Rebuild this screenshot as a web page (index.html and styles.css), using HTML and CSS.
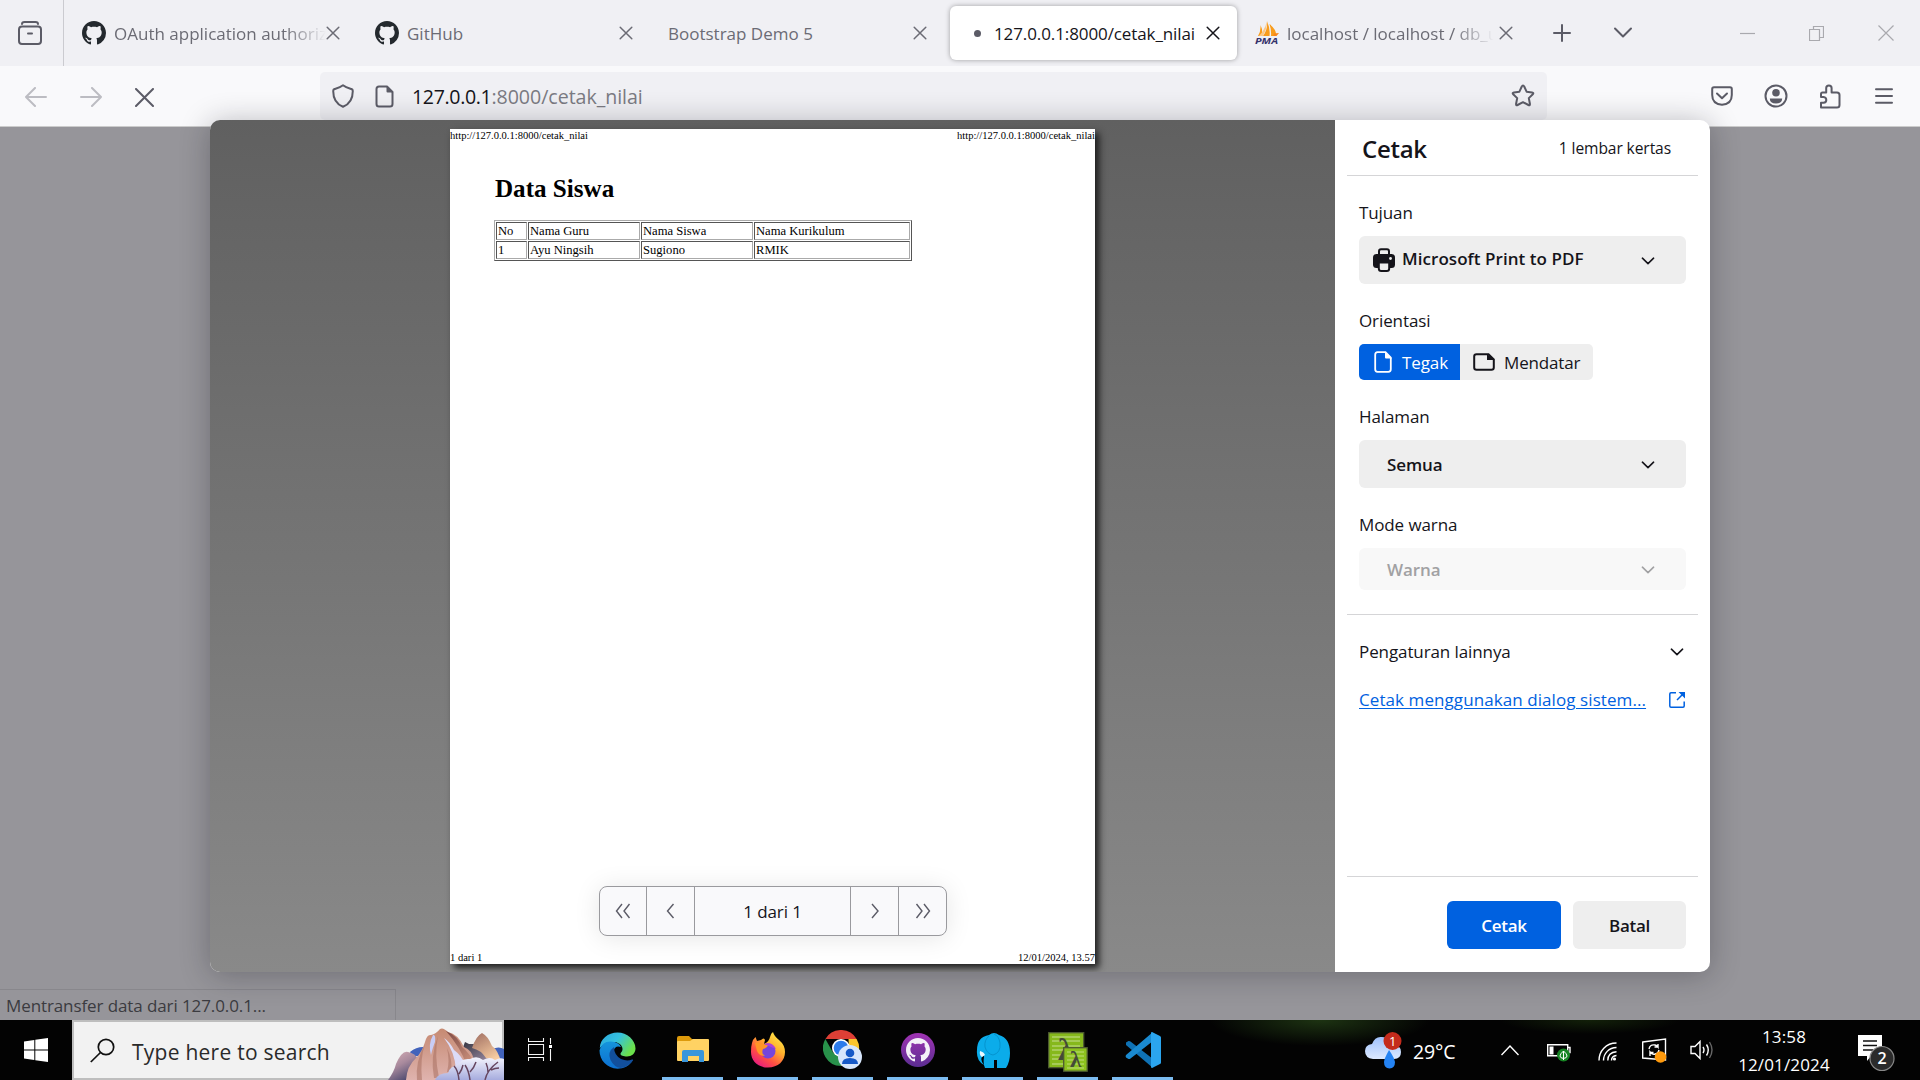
FILE: index.html
```html
<!DOCTYPE html>
<html lang="id">
<head>
<meta charset="utf-8">
<title>127.0.0.1:8000/cetak_nilai</title>
<link rel="stylesheet" href="styles.css">
</head>
<body>
<svg class="sprite" aria-hidden="true">
  <symbol id="github" viewBox="0 0 16 16"><path d="M8 0C3.58 0 0 3.58 0 8c0 3.54 2.29 6.53 5.47 7.59.4.07.55-.17.55-.38 0-.19-.01-.82-.01-1.49-2.01.37-2.53-.49-2.69-.94-.09-.23-.48-.94-.82-1.13-.28-.15-.68-.52-.01-.53.63-.01 1.08.58 1.23.82.72 1.21 1.87.87 2.33.66.07-.52.28-.87.51-1.07-1.78-.2-3.64-.89-3.64-3.95 0-.87.31-1.59.82-2.15-.08-.2-.36-1.02.08-2.12 0 0 .67-.21 2.2.82.64-.18 1.32-.27 2-.27s1.36.09 2 .27c1.53-1.04 2.2-.82 2.2-.82.44 1.1.16 1.92.08 2.12.51.56.82 1.27.82 2.15 0 3.07-1.87 3.75-3.65 3.95.29.25.54.73.54 1.48 0 1.07-.01 1.93-.01 2.2 0 .21.15.46.55.38A8.01 8.01 0 0 0 16 8c0-4.42-3.58-8-8-8z"/></symbol>
  <symbol id="close" viewBox="0 0 14 14"><path d="M1.2 1.2l11.6 11.6M12.8 1.2L1.2 12.8" fill="none" stroke="currentColor" stroke-width="1.5" stroke-linecap="round"/></symbol>
  <symbol id="chevron" viewBox="0 0 14 8"><path d="M1.4 1.2L7 6.6l5.6-5.4" fill="none" stroke="currentColor" stroke-width="1.6" stroke-linecap="round" stroke-linejoin="round"/></symbol>
</svg>

<header class="tabs">
  <div class="recent">
    <svg width="26" height="26" viewBox="0 0 26 26" fill="none" stroke="#5b5b66" stroke-width="2" stroke-linecap="round"><path d="M5 4Q5 2 7.5 2H18.500Q21 2 21 4"/><rect x="2" y="6.500" width="22" height="17.500" rx="3"/><path d="M11 13.500h4"/></svg>
  </div>
  <div class="tab tab-oauth">
    <svg class="favicon"><use href="#github"/></svg>
    <span class="tab-title fade">OAuth application authorization</span>
    <svg class="x"><use href="#close"/></svg>
  </div>
  <div class="tab tab-github">
    <svg class="favicon"><use href="#github"/></svg>
    <span class="tab-title">GitHub</span>
    <svg class="x"><use href="#close"/></svg>
  </div>
  <div class="tab tab-demo">
    <span class="tab-title">Bootstrap Demo 5</span>
    <svg class="x"><use href="#close"/></svg>
  </div>
  <div class="tab tab-active">
    <i class="dot"></i>
    <span class="tab-title">127.0.0.1:8000/cetak_nilai</span>
    <svg class="x"><use href="#close"/></svg>
  </div>
  <div class="tab tab-pma">
    <svg class="sails" width="24" height="24" viewBox="0 0 24 24">
      <path d="M3 15Q6 10 5.500 4Q8 9 7 15zM8 15Q13 8 12 0Q15.500 8 14.500 15zM16 15Q16.500 9 14.500 3Q22 9 21 15z" fill="#f89c1c"/>
      <path d="M8 15Q12 8 12 0L10.500 5Q8 11 4 15z" fill="#fbc888"/>
      <path d="M19 12.500l5-.500-2.500 3h-3z" fill="#f8871c"/>
      <text x="0" y="23.200" class="pma" textLength="23" lengthAdjust="spacingAndGlyphs">PMA</text>
    </svg>
    <span class="tab-title fade">localhost / localhost / db_uas</span>
    <svg class="x"><use href="#close"/></svg>
  </div>
  <div class="tab-tools">
    <svg width="18" height="18" viewBox="0 0 18 18" stroke="#5b5b66" stroke-width="2" stroke-linecap="round"><path d="M9 1v16M1 9h16"/></svg>
    <svg width="20" height="12" viewBox="0 0 20 12" fill="none" stroke="#5b5b66" stroke-width="2" stroke-linecap="round" stroke-linejoin="round"><path d="M2 1.500l8 8 8-8"/></svg>
  </div>
  <div class="window-tools">
    <svg width="15" height="15" viewBox="0 0 15 15"><path d="M0 7.500h15"/></svg>
    <svg width="15" height="15" viewBox="0 0 15 15"><path d="M.5 3.500h10v11H.5zM4.500 3.500v-3h10v11h-4"/></svg>
    <svg width="16" height="16" viewBox="0 0 16 16"><path d="M.5.500l15 15M15.500.500l-15 15"/></svg>
  </div>
</header>

<nav class="nav">
  <div class="history">
    <svg class="off" width="22" height="20" viewBox="0 0 22 20"><path d="M21 10H1M10 1L1 10l9 9"/></svg>
    <svg class="off" width="22" height="20" viewBox="0 0 22 20"><path d="M1 10h20M12 1l9 9-9 9"/></svg>
    <svg width="19" height="19" viewBox="0 0 19 19"><path d="M1 1l17 17M18 1L1 18"/></svg>
  </div>
  <div class="urlbar">
    <svg width="22" height="24" viewBox="0 0 22 24"><path d="M11 1.200C8 3.500 5 4.200 2.500 5Q1.200 5.500 1.200 7C1.200 14 4 20 11 22.800C18 20 20.800 14 20.800 7Q20.800 5.500 19.500 5C17 4.200 14 3.500 11 1.200z"/></svg>
    <svg width="19" height="23" viewBox="0 0 19 23"><path d="M4 1.500h8l5.500 5.500v12q0 2.500-2.500 2.500H4q-2.500 0-2.500-2.500V4q0-2.500 2.500-2.500z"/><path d="M11.500 1v5.500q0 1 1 1H18z" fill="#5b5b66" stroke="none"/></svg>
    <span class="url"><b>127.0.0.1</b>:8000/cetak_nilai</span>
    <svg class="star" width="24" height="24" viewBox="0 0 24 24"><path d="M12 1.500q.8 0 1.200 1l2.400 5.200 5.500.700q2 .400.700 1.800l-4 3.900 1.100 5.700q.2 2-1.500 1.200L12 18.200l-5.400 2.800q-1.700.800-1.500-1.200l1.100-5.700-4-3.900Q.9 8.800 2.900 8.400l5.500-.700 2.400-5.200q.4-1 1.200-1z"/></svg>
  </div>
  <div class="nav-tools">
    <svg width="22" height="20" viewBox="0 0 22 20"><path d="M3 1.200h16q1.800 0 1.800 1.800v6q0 9-9.800 9.800Q1.200 18 1.200 9V3q0-1.800 1.800-1.800z"/><path d="M6 7.500l5 4.700 5-4.700"/></svg>
    <svg width="24" height="24" viewBox="0 0 24 24"><circle cx="12" cy="12" r="10.500"/><circle cx="12" cy="8.800" r="3.800" class="solid"/><path d="M5.800 14.500h12.400q0 5-6.200 5t-6.200-5z" class="solid"/></svg>
    <svg width="22" height="25" viewBox="0 0 22 25"><path d="M3.500 8.500h3.700V4q0-2.500 2.700-2.500T12.600 4v4.500h5.400q2.500 0 2.500 2.500v10q0 2.500-2.500 2.500H2V18.800h2.500q2.800-.400 2.800-2.900t-2.800-2.900H2v-3q0-1.500 1.500-1.500z"/></svg>
    <svg width="18" height="16" viewBox="0 0 18 16"><path d="M1 1.200h16M1 8h16M1 14.800h16"/></svg>
  </div>
</nav>

<main class="backdrop">
  <div class="status">Mentransfer data dari 127.0.0.1...</div>
</main>

<section class="dialog">
  <div class="preview">
    <article class="sheet">
      <div class="sheet-line"><span>http://127.0.0.1:8000/cetak_nilai</span><span>http://127.0.0.1:8000/cetak_nilai</span></div>
      <div class="sheet-body">
        <h1>Data Siswa</h1>
        <div class="table">
          <span>No</span><span>Nama Guru</span><span>Nama Siswa</span><span>Nama Kurikulum</span>
          <span>1</span><span>Ayu Ningsih</span><span>Sugiono</span><span>RMIK</span>
        </div>
      </div>
      <div class="sheet-line"><span>1 dari 1</span><span>12/01/2024, 13.57</span></div>
    </article>
    <div class="pager">
      <span><svg width="16" height="16" viewBox="0 0 16 16"><path d="M7 1L1.500 8 7 15M14.500 1L9 8l5.500 7"/></svg></span>
      <span><svg width="16" height="16" viewBox="0 0 16 16"><path d="M10.500 1L4.500 8l6 7"/></svg></span>
      <span class="count">1 dari 1</span>
      <span><svg width="16" height="16" viewBox="0 0 16 16"><path d="M5 1l6 7-6 7"/></svg></span>
      <span><svg width="16" height="16" viewBox="0 0 16 16"><path d="M1.500 1L7 8l-5.500 7M9 1l5.500 7L9 15"/></svg></span>
    </div>
  </div>
  <aside class="settings">
    <div class="settings-head"><h2>Cetak</h2><span>1 lembar kertas</span></div>
    <div class="fields">
      <label>Tujuan</label>
      <div class="select printer">
        <svg width="22" height="24" viewBox="0 0 22 24"><path d="M6 7V3.500Q6 1.200 8 1.200h6q2 0 2 2.300V7" fill="none" stroke="#15141a" stroke-width="2"/><rect y="6" width="22" height="14" rx="3.500" fill="#15141a"/><path d="M5.800 14.500h10.400v6q0 2.500-2.500 2.500H8.300q-2.500 0-2.500-2.500z" fill="#eee" stroke="#15141a" stroke-width="2"/><circle cx="17.500" cy="10.500" r="1.400" fill="#eee"/></svg>
        <span>Microsoft Print to PDF</span>
        <svg class="chev"><use href="#chevron"/></svg>
      </div>
      <label>Orientasi</label>
      <div class="toggle">
        <div class="portrait"><svg width="18" height="22" viewBox="0 0 18 22"><path d="M3.500 1.200h8l5.300 5.300v11.800q0 2.500-2.500 2.500H3.500Q1.200 20.800 1.200 18.300V3.700Q1.200 1.200 3.500 1.200z" fill="none" stroke="#fff" stroke-width="1.800"/><path d="M11 1v5.500q0 1 1 1h6z" fill="#fff"/></svg><span>Tegak</span></div>
        <div class="landscape"><svg width="22" height="18" viewBox="0 0 22 18"><path d="M3.500 1.200h12l5.300 5.300v8q0 2.300-2.300 2.300h-15q-2.300 0-2.300-2.300v-11q0-2.300 2.300-2.300z" fill="none" stroke="#15141a" stroke-width="2"/><path d="M14 1v6h7.500z" fill="#15141a"/></svg><span>Mendatar</span></div>
      </div>
      <label>Halaman</label>
      <div class="select"><span>Semua</span><svg class="chev"><use href="#chevron"/></svg></div>
      <label>Mode warna</label>
      <div class="select disabled"><span>Warna</span><svg class="chev"><use href="#chevron"/></svg></div>
    </div>
    <div class="more">
      <div class="more-row"><span>Pengaturan lainnya</span><svg class="chev"><use href="#chevron"/></svg></div>
      <div class="more-row link"><a>Cetak menggunakan dialog sistem...</a>
        <svg width="16" height="16" viewBox="0 0 16 16" fill="none" stroke="#0061e0" stroke-width="1.500"><path d="M7 .8H2Q.8.800.8 2v12q0 1.200 1.200 1.200h12q1.200 0 1.200-1.200V9.500M8 8l6.500-6.500"/><path d="M9.500 0H16v6.500z" fill="#0061e0" stroke="none"/></svg>
      </div>
    </div>
    <div class="actions"><button class="primary">Cetak</button><button>Batal</button></div>
  </aside>
</section>

<footer class="taskbar">
  <div class="start"><svg width="24" height="24" viewBox="0 0 24 24" fill="#fff"><path d="M0 3.400L10.300 2v9.500H0zM11.300 1.800L24 0v11.500H11.300zM0 12.500h10.300V22L0 20.600zM11.300 12.500H24V24l-12.700-1.800z"/></svg></div>
  <div class="search">
    <svg width="25" height="25" viewBox="0 0 25 25" fill="none" stroke="#111" stroke-width="1.700"><circle cx="16" cy="9" r="7.700"/><path d="M10.500 14.500L.8 24"/></svg>
    <span>Type here to search</span>
    <svg class="mountains" width="116" height="52" viewBox="0 0 116 52">
      <defs>
        <linearGradient id="m1" x1="0" y1="0" x2=".6" y2="1"><stop offset="0" stop-color="#dcb3b8"/><stop offset=".5" stop-color="#a98a9d"/><stop offset="1" stop-color="#4f4b70"/></linearGradient>
        <linearGradient id="m2" x1="0" y1="0" x2="0" y2="1"><stop offset="0" stop-color="#c68a72"/><stop offset="1" stop-color="#dfb3ae"/></linearGradient>
        <linearGradient id="m3" x1="0" y1="0" x2="1" y2="1"><stop offset="0" stop-color="#7d4a45"/><stop offset="1" stop-color="#d79c84"/></linearGradient>
        <linearGradient id="m4" x1="0" y1="0" x2=".6" y2="1"><stop offset="0" stop-color="#9e6c60"/><stop offset="1" stop-color="#f7cda2"/></linearGradient>
        <linearGradient id="m5" x1="0" y1="0" x2="0" y2="1"><stop offset="0" stop-color="#f4f4fd"/><stop offset="1" stop-color="#a6acde"/></linearGradient>
        <linearGradient id="m6" x1="0" y1="0" x2="1" y2="1"><stop offset="0" stop-color="#33333f"/><stop offset="1" stop-color="#ad9bb4"/></linearGradient>
      </defs>
      <path d="M22 24q6-5 13-5v9H24zM104 21q7-3 12 0v12h-12z" fill="#4263bb"/>
      <path d="M0 52Q6 44 8 36Q14 22 20 24Q27 25 31 32V52z" fill="url(#m1)"/>
      <path d="M74 22l3-8 4 2 5 0 8 8 13 12H76z" fill="url(#m6)"/>
      <path d="M84 20Q88 8 94 5Q100 8 104 18Q110 22 113 34L98 30Q93 22 84 20z" fill="url(#m4)"/>
      <path d="M18 52Q19 38 28 30Q34 24 37 14Q39 6 43 7Q48 6 52 1Q55-1 60 4Q70 6 76 19Q84 22 86 32V52z" fill="url(#m2)"/>
      <path d="M58 3Q70 8 74 19Q82 25 88 38L78 36Q73 20 58 3z" fill="url(#m3)"/>
      <path d="M45 7Q48 6 47 14Q44 22 43 27Q40 16 45 7z" fill="#c9cdf5"/>
      <path d="M56 10Q62 14 66 22Q73 27 77 36Q77 40 74 42H68Q67 24 56 10z" fill="#dcdcf8"/>
      <path d="M37 16Q32 30 34 52H29Q27 34 37 16zM50 8Q46 26 51 50H46Q42 28 50 8zM59 20q6 12 4 24h-4q3-11 0-24z" fill="#a76f60" opacity=".55"/>
      <path d="M47 52Q50 45 60 45Q62 38 70 37Q73 30 82 31Q89 27 95 32Q102 28 107 32Q112 29 116 31V52z" fill="url(#m5)"/>
      <path d="M71 52Q70 42 66 38M71 46q3-4 4-9M82 52q-1-9-5-15M82 44q4-4 6-10M97 52q2-10 13-18M100 45q0-6-2-10M103 42q4-2 8-2" fill="none" stroke="#65455f" stroke-width="1.500"/>
    </svg>
  </div>
  <div class="taskview"><svg width="24" height="24" viewBox="0 0 24 24" fill="none" stroke="#f4f4f4" stroke-width="1.100"><path d="M.5 0v3.500h15V0M.5 6.500h15v10H.5zM.5 23v-3.500h15V23M22.500 0v6M22.500 11v12"/><rect x="21" y="7" width="3" height="3" fill="#fff" stroke="none"/></svg></div>

  <div class="app idle"><svg width="37" height="37" viewBox="0 0 37 37">
    <defs><linearGradient id="e1" x1="0" x2="1" y1="0" y2=".5"><stop offset="0" stop-color="#2aa7dc"/><stop offset=".5" stop-color="#35c1e0"/><stop offset="1" stop-color="#6be04b"/></linearGradient><linearGradient id="e2" x1="0" x2="0" y1="0" y2="1"><stop offset="0" stop-color="#1595dc"/><stop offset="1" stop-color="#0d6fd0"/></linearGradient></defs>
    <path d="M.8 16C1 7 9 .500 18.500.500S36.500 8 36.500 16.500c0 5-4 8-8.500 8-3.500 0-6.500-1-6.500-2.500s2-2 2-5-3-6.500-8-7Q6 9 .800 16z" fill="url(#e1)"/>
    <path d="M.5 18.500Q3 9 12 9.500q8 .500 10 5.500-6-2-7.500 4c-1 6 5 12 12 12q3 0 6.500-1.500-5 7-14.500 7.200C8 36.500.500 28 .500 18.500z" fill="url(#e2)"/>
    <path d="M15 15Q8 20 11.500 28q3.500 7 10 8 8-1 12.500-7.500.5-1.500-1-1Q28 29.500 22 27q-7-4-7-12z" fill="#124f9c"/></svg></div>
  <div class="app"><svg width="32" height="28" viewBox="0 0 32 28"><path d="M0 2q0-2 2-2h10l3 3h10v10H0z" fill="#dd9a0b"/><path d="M0 6q0-1 1-1h12l3-2h15q1 0 1 1v20q0 1-1 1H1q-1 0-1-1z" fill="#ffd263"/><path d="M5 26V16q0-2 2-2h18q2 0 2 2v10h-5v-6H11v6z" fill="#3996db"/></svg></div>
  <div class="app"><svg width="36" height="36" viewBox="0 0 36 36">
    <defs><linearGradient id="f1" x1=".9" y1="0" x2=".2" y2="1"><stop offset="0" stop-color="#fff44f"/><stop offset=".4" stop-color="#ffb02c"/><stop offset=".7" stop-color="#ff4f43"/><stop offset="1" stop-color="#e31587"/></linearGradient></defs>
    <path d="M2 11Q3 7 5.500 5L7 9l4-1q3-3 4 0l-1 4q5-2 6-7 1-4 3-5 1 4 6 8 6 5 6 12c0 9-7 15.500-17 15.500S1 29 1 20Q1 14 2 11z" fill="url(#f1)"/>
    <circle cx="18" cy="19" r="7.500" fill="#7645dc"/><path d="M5 11q5-2 8 1l5 1q-1 3-5 4-2 5 2 7-6 0-8-5z" fill="#ff9526"/><path d="M14 12Q22 9 26 17l-5-2z" fill="#ae3fd8"/></svg></div>
  <div class="app"><svg width="40" height="40" viewBox="0 0 40 40"><path d="M2.400 9A18 18 0 0 1 33.600 9H18z" fill="#dd3f35"/><path d="M33.600 9A18 18 0 0 1 18 36l8-13.500L25.500 9z" fill="#fbc52e"/><path d="M18 36A18 18 0 0 1 2.400 9L10 22.500l8 4.500z" fill="#28914a"/><circle cx="18" cy="18" r="9" fill="#fff"/><circle cx="18" cy="18" r="7.300" fill="#2c7bea"/><circle cx="27" cy="27" r="12" fill="#d7e6fc"/><circle cx="27" cy="23" r="4.300" fill="#1659c7"/><path d="M19 34q0-6 8-6t8 6z" fill="#1659c7"/></svg></div>
  <div class="app"><svg width="34" height="34" viewBox="0 0 34 34"><defs><linearGradient id="g1" x1="0" y1="0" x2="0" y2="1"><stop offset="0" stop-color="#a033b3"/><stop offset="1" stop-color="#5b2d91"/></linearGradient></defs><circle cx="17" cy="17" r="17" fill="url(#g1)"/><svg x="5" y="5" width="24" height="24" fill="#f4f0f8"><use href="#github"/></svg></svg></div>
  <div class="app"><svg width="36" height="37" viewBox="0 0 36 37"><path d="M2 18Q2 5 14 3Q19-1 24 3Q35 6 35 21Q35 30 31 36H22V28H19V36H10Q8 33 9 25Q9 22 7 25T9 33Q1 29 2 18z" fill="#0bacea"/><path d="M14 4q-5 4-4 11 2 7 8 8 8-2 7-12-1-7-6-9" fill="none" stroke="#0594cf" stroke-width="1"/><path d="M5 19q4 1 5 4l-3 2q-3-2-2-6z" fill="#eaf9ff"/></svg></div>
  <div class="app"><svg class="lambda-icon" width="40" height="40" viewBox="0 0 40 40" stroke="#4e5a31" stroke-width="1.300"><rect x=".7" y=".7" width="35" height="35" fill="#86b81c"/><path d="M4 5h28M4 9h28M4 14h28M4 18h28M4 23h28M4 27h28M4 32h28" stroke="#c6de91" stroke-width="1.200"/><text x="10" y="28" class="lambda" font-size="32">λ</text><rect x="15.700" y="15.700" width="23.500" height="23.500" fill="#8cc11e"/><path d="M19 20h17M19 24h17M19 28h17M19 32h17M19 36h17" stroke="#bfdc7d" stroke-width="1"/><text x="22" y="35" class="lambda" font-size="23">λ</text></svg></div>
  <div class="app"><svg width="36" height="36" viewBox="0 0 36 36"><path d="M1 10.500l2.500-1.500q1-.3 2 .5L28 27v9L1 13z" fill="#0f72b5"/><path d="M1 25.500L3.500 27q1 .3 2-.5L28 9V0L1 23q-.8 1.200 0 2.500z" fill="#1a8ad0"/><path d="M26 .300Q27 0 28 .500l7 3.400q1 .5 1 1.700v24.800q0 1.200-1 1.700l-7 3.400q-1 .5-2 0z" fill="#2ba5ee"/></svg></div>

  <div class="tray">
    <div class="weather"><svg width="40" height="38" viewBox="0 0 40 38"><defs><linearGradient id="w1" x1="0" y1="0" x2="0" y2="1"><stop offset="0" stop-color="#9fc1fb"/><stop offset="1" stop-color="#dce9ff"/></linearGradient></defs><path d="M8 28Q0 27 0 20q0-6 7-7Q10 5 17 6q8 0 11 8 8 0 8 7 0 7-7 7z" fill="url(#w1)"/><path d="M24 19q5 7 6 12 0 6-5.500 6.500Q19 37 19 31q0-3 5-12z" fill="#2483f3"/><circle cx="27.500" cy="10" r="9" fill="#c42b1c"/><text x="24" y="15" fill="#fff" font-size="13">1</text></svg><span>29°C</span></div>
    <svg class="up" width="18" height="11" viewBox="0 0 18 11"><path d="M.5 10L9 1l8.500 9"/></svg>
    <svg class="battery" width="24" height="20" viewBox="0 0 24 20"><path d="M.7 2.700h20v11H.7zM21 5.500h2v5h-2"/><rect x="2.500" y="4.500" width="4" height="8" fill="#fff" stroke="none"/><circle cx="16.500" cy="13" r="6.500" fill="#168423" stroke="none"/><path d="M16.500 18v-9q-3.500 3-3.500 5t3.500 2.500q3.500-.500 3.500-2.500t-3.500-5" stroke-width="1"/></svg>
    <svg class="wifi" width="20" height="20" viewBox="0 0 20 20"><path d="M1 18.500C1 9 8 1 18.500 1M5.500 18.500C5.500 11.500 11 5.500 18.500 5.500M9.800 18.500q0-8 8.700-8.700M13.500 18.500q0-4.500 5-5"/><circle cx="16.500" cy="17" r="1.600" fill="#fff" stroke="none"/></svg>
    <svg class="update" width="25" height="25" viewBox="0 0 25 25"><path d="M.7 4L23.500 1v21L.7 20zM7 11q1-5 6-4 2 .5 3 2V6M16 9h-3.500M17 12q-1 5-6 4-2-.5-3-2v4M8 14.500h3.500"/><circle cx="18.500" cy="19" r="5.800" fill="#ff9a0c" stroke="none"/></svg>
    <svg class="sound" width="24" height="20" viewBox="0 0 24 20"><path d="M1 6.500h4l5-5v17l-5-5H1zM13 7q2 3 0 6M16.500 4.500q3.500 5.500 0 11"/><path d="M19.500 2q5 8 0 16" stroke="#666"/></svg>
    <div class="clock"><span>13:58</span><span>12/01/2024</span></div>
    <svg class="notes" width="38" height="38" viewBox="0 0 38 38"><path d="M0 1h24v21H13l-4 5v-5H0z" fill="#fff"/><path d="M5 7h14M5 11.500h14M5 16h10" stroke="#111" stroke-width="1.400"/><circle cx="24" cy="24.500" r="12" fill="#2b2b2b" stroke="#888" stroke-width="1.200"/><text x="19.500" y="30" fill="#fff" font-size="16" font-weight="600">2</text></svg>
  </div>
</footer>
</body>
</html>
```

FILE: styles.css
```css
* { box-sizing: border-box; }
body {
  margin: 0;
  width: 1920px;
  height: 1080px;
  overflow: hidden;
  display: flex;
  flex-direction: column;
  position: relative;
  font: 17px/24px "Open Sans", "Noto Sans", sans-serif;
  letter-spacing: -0.1px;
  color: #15141a;
}
svg { display: block; flex: none; }
.sprite { display: none; }

/* Tab strip */
.tabs { height: 66px; background: #f0f0f4; display: flex; align-items: center; }
.recent { width: 64px; height: 66px; padding: 20px 0 0 17px; border-right: 1px solid #cbcbd0; }
.tab { display: flex; align-items: center; height: 54px; color: #6b6b74; letter-spacing: 0; }
.favicon { width: 24px; height: 24px; margin-right: 8px; fill: #24292e; }
.x { width: 14px; height: 14px; color: #6b6b74; }
.tab-title { flex: 1; margin-top: 1px; white-space: nowrap; overflow: hidden; }
.fade { mask-image: linear-gradient(to right, #000 calc(100% - 42px), transparent); }
.tab-oauth { margin-left: 18px; width: 258px; }
.tab-github { margin-left: 35px; width: 258px; }
.tab-demo { margin-left: 35px; width: 259px; }
.tab-active {
  margin-left: 23px;
  width: 287px;
  padding: 0 17px 0 24px;
  background: #fff;
  border-radius: 6px;
  box-shadow: 0 0 5px rgba(0, 0, 0, .35);
  color: #15141a;
  letter-spacing: -0.1px;
}
.tab-active .x { color: #15141a; }
.dot { width: 7px; height: 7px; margin-right: 13px; border-radius: 50%; background: #5b5b66; }
.tab-pma { margin-left: 18px; width: 258px; }
.tab-pma .tab-title { margin: 1px 5px 0 8px; }
.sails { overflow: visible; }
.pma { font: italic 700 9.5px "Open Sans", sans-serif; fill: #35336b; }
.tab-tools { display: flex; align-items: center; gap: 42px; margin-left: 40px; }
.window-tools { display: flex; align-items: center; gap: 54px; margin-left: 107px; }
.window-tools svg { fill: none; stroke: #a9a9ae; stroke-width: 1.2; }

/* Navigation bar */
.nav { height: 61px; background: #f9f9fb; border-bottom: 1px solid #ccc; display: flex; padding-top: 6px; }
.nav svg { fill: none; stroke: #5b5b66; stroke-width: 2; stroke-linecap: round; stroke-linejoin: round; }
.nav svg .solid { fill: #5b5b66; stroke: none; }
.history { width: 320px; height: 50px; padding-left: 25px; display: flex; align-items: center; gap: 33px; }
.history .off { stroke: #bcbcc2; }
.urlbar { width: 1227px; height: 48px; padding: 0 12px; background: #f0f0f4; border-radius: 5px; display: flex; align-items: center; }
.urlbar svg:nth-child(2) { margin-left: 21px; }
.url { margin: 2px 0 0 18px; font-size: 19.6px; letter-spacing: -0.04px; color: #7b7b83; }
.url b { font-weight: 400; color: #15141a; letter-spacing: -0.36px; }
.star { margin-left: auto; }
.nav-tools { display: flex; align-items: center; height: 48px; gap: 31px; margin-left: 164px; }
.nav-tools svg:last-child { margin-left: 3px; }

/* Dimmed page */
.backdrop { flex: 1; background: #96959a; display: flex; align-items: flex-end; }
.status {
  width: 396px;
  height: 31px;
  padding: 4px 6px;
  border: solid #88878c;
  border-width: 1px 1px 0 0;
  color: #3b3b40;
}

/* Print dialog */
.dialog {
  position: absolute;
  left: 210px;
  top: 120px;
  width: 1500px;
  height: 852px;
  display: flex;
  border-radius: 10px;
  overflow: hidden;
  background: #fff;
  box-shadow: 0 3px 30px rgba(20, 20, 30, .3);
}
.preview {
  position: relative;
  width: 1125px;
  padding: 9px 240px 8px;
  background: linear-gradient(#606060, #898989);
}
.sheet {
  height: 835px;
  display: flex;
  flex-direction: column;
  background: #fff;
  box-shadow: 4px 4px 7px #1c1c1c;
  color: #000;
  font-family: "Liberation Serif", serif;
  letter-spacing: 0;
}
.sheet-line { display: flex; justify-content: space-between; font-size: 10.55px; line-height: 13px; }
.sheet-body { flex: 1; padding: 32px 44px; }
.sheet-body h1 { margin: 0 0 16px 1px; font-size: 25.1px; line-height: 30px; }
.table {
  width: 418px;
  height: 41px;
  display: grid;
  grid-template-columns: 31px 112px 112px 1fr;
  grid-template-rows: 18px 18px;
  gap: 1px;
  padding: 1px;
  border: 1px solid;
  border-color: #aaa #555 #555 #aaa;
}
.table span { padding-left: 1px; border: 1px solid; border-color: #555 #aaa #aaa #555; font-size: 12.6px; line-height: 16px; }
.pager {
  position: absolute;
  left: 389px;
  top: 766px;
  width: 348px;
  height: 50px;
  display: grid;
  grid-template-columns: 46px 48px 1fr 48px 48px;
  background: #f9f9fb;
  border: 1px solid #9a9a9e;
  border-radius: 8px;
  box-shadow: 0 2px 26px rgba(0, 0, 0, .1);
}
.pager span { display: flex; align-items: center; justify-content: center; border-left: 1px solid #9a9a9e; }
.pager span:first-child { border: 0; }
.pager .count { padding-top: 2px; }
.pager svg { fill: none; stroke: #5b5b66; stroke-width: 1.4; }

/* Settings column */
.settings { width: 375px; padding: 0 12px; display: flex; flex-direction: column; }
.settings-head {
  height: 56px;
  padding: 0 27px 0 15px;
  border-bottom: 1px solid #d5d5d7;
  display: flex;
  align-items: center;
  justify-content: space-between;
}
.settings-head h2 { margin: 3px 0 0; font-size: 24px; font-weight: 600; letter-spacing: -0.3px; }
.settings-head span { font-size: 15.6px; }
.fields { padding: 25px 12px 24px; border-bottom: 1px solid #d5d5d7; display: flex; flex-direction: column; }
.fields label { margin-bottom: 11px; }
.select {
  height: 48px;
  margin-bottom: 25px;
  padding: 2px 31px 0 28px;
  border-radius: 6px;
  background: #eee;
  font-weight: 600;
  display: flex;
  align-items: center;
  justify-content: space-between;
}
.printer { padding-left: 14px; letter-spacing: 0.05px; }
.printer svg:first-child { margin-top: -2px; }
.printer span { flex: 1; margin: -5px 0 0 7px; }
.disabled { height: 42px; margin: 0; background: #f8f8f8; color: #a1a1a3; }
.chev { width: 14px; height: 8px; }
.toggle { display: flex; height: 36px; margin-bottom: 25px; }
.toggle div { display: flex; align-items: center; }
.toggle span { margin-top: 2px; }
.portrait { width: 101px; padding-left: 15px; gap: 10px; background: #0061e0; color: #fff; border-radius: 5px 0 0 5px; }
.landscape { width: 133px; padding-left: 13px; gap: 9px; background: #eee; border-radius: 0 5px 5px 0; letter-spacing: -0.15px; }
.more { flex: 1; padding: 25px 12px; display: flex; flex-direction: column; gap: 24px; }
.more-row { display: flex; align-items: center; justify-content: space-between; height: 24px; padding-right: 2px; }
.link { padding-right: 1px; letter-spacing: 0.08px; }
.link a { color: #0061e0; text-decoration: underline; text-underline-offset: 2px; }
.actions { height: 96px; padding: 24px 12px 0; border-top: 1px solid #d5d5d7; display: flex; justify-content: flex-end; gap: 12px; }
button {
  width: 113px;
  height: 48px;
  padding: 2px 0 0;
  border: 0;
  border-radius: 6px;
  background: #eee;
  color: #15141a;
  font: inherit;
  font-weight: 600;
  letter-spacing: -0.3px;
}
.primary { width: 114px; background: #0061e0; color: #fff; }

/* Taskbar */
.taskbar {
  height: 60px;
  display: flex;
  color: #fff;
  background: radial-gradient(ellipse 110px 26px at 1320px 0, #1d3312, transparent), radial-gradient(ellipse 90px 14px at 1590px 0, #122009, transparent), #030303;
}
.start { width: 72px; display: flex; align-items: center; justify-content: center; }
.search {
  position: relative;
  width: 432px;
  padding-left: 16px;
  border: 2px solid #bebebe;
  background: #f2f2f2;
  color: #2a2a2a;
  display: flex;
  align-items: center;
  font-size: 21px;
  letter-spacing: 0.25px;
}
.search span { margin: 4px 0 0 17px; }
.mountains { position: absolute; right: -2px; bottom: -2px; }
.taskview { width: 76px; padding: 18px 0 0 24px; }
.app { width: 75px; display: flex; align-items: center; justify-content: center; background: linear-gradient(#7cbcf0, #7cbcf0) center bottom / 61px 3px no-repeat; }
.idle { background: none; }
.lambda-icon { margin-top: 3px; }
.tray { display: flex; align-items: center; margin-left: 185px; }
.tray > svg { fill: none; stroke: #fff; stroke-width: 1.4; }
.weather { width: 136px; display: flex; align-items: center; gap: 8px; font-size: 19.5px; letter-spacing: -0.1px; }
.weather span { margin-top: 3px; }
.battery { margin: 4px 0 0 28px; }
.wifi { margin: 4px 0 0 27px; }
.update { margin-left: 24px; }
.sound { margin: 0 0 0 23px; }
.clock { width: 94px; margin: 1px 0 0 23px; display: flex; flex-direction: column; align-items: center; gap: 4px; letter-spacing: 0.15px; }
.tray .notes { margin: 6px 0 0 27px; stroke: none; fill: #fff; }
.lambda { font-family: "Liberation Serif", serif; font-weight: 700; fill: #444a38; stroke: none; }
```
